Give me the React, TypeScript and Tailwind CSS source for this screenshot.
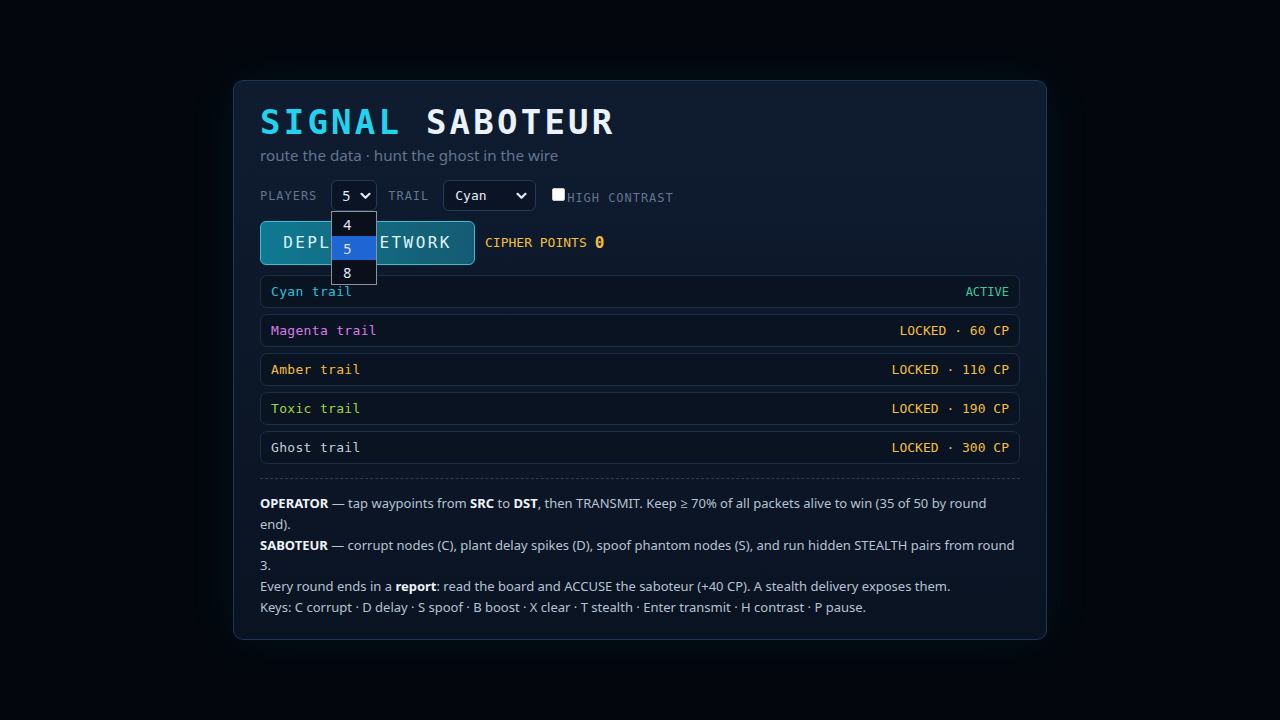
import React from "react";

const mono = { fontFamily: '"DejaVu Sans Mono", "Liberation Mono", monospace' };
const sans = { fontFamily: '"Noto Sans", "Open Sans", sans-serif' };

function Chevron() {
  return (
    <svg width="11" height="8" viewBox="0 0 11 8" fill="none">
      <path d="M1.5 1.8 L5.5 5.8 L9.5 1.8" stroke="#e5ecf5" strokeWidth="2.2" strokeLinecap="round" strokeLinejoin="round" />
    </svg>
  );
}

const trails = [
  { name: "Cyan trail", color: "text-[#22c5dd]", status: "ACTIVE", statusColor: "text-[#36c8a2] text-[12px]" },
  { name: "Magenta trail", color: "text-[#d77ce6]", status: "LOCKED · 60 CP", statusColor: "text-[#f3bf3a] text-[13px]" },
  { name: "Amber trail", color: "text-[#f3bf3a]", status: "LOCKED · 110 CP", statusColor: "text-[#f3bf3a] text-[13px]" },
  { name: "Toxic trail", color: "text-[#a3d63b]", status: "LOCKED · 190 CP", statusColor: "text-[#f3bf3a] text-[13px]" },
  { name: "Ghost trail", color: "text-[#c3cfdf]", status: "LOCKED · 300 CP", statusColor: "text-[#f3bf3a] text-[13px]" },
];

export default function App() {
  return (
    <div className="min-h-screen w-full bg-[#03060d] flex items-center justify-center">
      <div className="w-[814px] h-[560px] rounded-[10px] border border-[#1f3654] bg-gradient-to-b from-[#0f1c30] to-[#0a1322] shadow-[0_0_50px_rgba(34,211,238,0.07)] px-[26px] pt-[20px]">
        <h1 className="text-[34px] leading-[42px] font-bold tracking-[0.095em]" style={mono}>
          <span className="text-[#22d3ee]">SIGNAL</span> <span className="text-[#eaf2ff]">SABOTEUR</span>
        </h1>
        <div className="mt-[1px] text-[15.2px] leading-[22px] text-[#63758f]" style={sans}>
          route the data · hunt the ghost in the wire
        </div>

        <div className="mt-[14px] flex items-center h-[31px]">
          <span className="text-[12px] tracking-[0.08em] text-[#63758f]" style={mono}>PLAYERS</span>
          <div className="relative ml-[14px]">
            <div className="w-[46px] h-[31px] rounded-[6px] border border-[#26395a] bg-[#0b1424] flex items-center justify-between pl-[10px] pr-[5px]">
              <span className="text-[14px] text-[#e5ecf5]" style={sans}>5</span>
              <Chevron />
            </div>
            <div className="absolute left-0 top-[31px] w-[46px] border border-[#8a929e] bg-[#0a0f1c] z-10 text-[14px] text-[#e5ecf5]" style={sans}>
              <div className="h-[24px] pl-[11px] flex items-center">4</div>
              <div className="h-[24px] pl-[11px] flex items-center bg-[#1f65d3]">5</div>
              <div className="h-[24px] pl-[11px] flex items-center">8</div>
            </div>
          </div>
          <span className="ml-[11px] text-[12px] tracking-[0.08em] text-[#63758f]" style={mono}>TRAIL</span>
          <div className="ml-[14px] w-[93px] h-[31px] rounded-[6px] border border-[#26395a] bg-[#0b1424] flex items-center justify-between pl-[11px] pr-[8px]">
            <span className="text-[13px] text-[#e5ecf5]" style={mono}>Cyan</span>
            <Chevron />
          </div>
          <label className="ml-[16px] flex items-center">
            <span className="w-[13px] h-[13px] rounded-[2px] bg-white border border-[#c9ced6] mt-[-2px]"></span>
            <span className="ml-[2px] mt-[4px] text-[12px] tracking-[0.08em] text-[#63758f]" style={mono}>HIGH CONTRAST</span>
          </label>
        </div>

        <div className="mt-[10px] flex items-center">
          <div className="w-[215px] h-[44px] rounded-[6px] border border-[#38bdd4] bg-gradient-to-r from-[#0f7a92] to-[#145b72] flex items-center justify-center text-[16px] tracking-[0.15em] text-[#dff5fb]" style={mono}>
            DEPLOY NETWORK
          </div>
          <span className="ml-[10px] text-[13px] text-[#f3bf3a]" style={mono}>CIPHER POINTS</span>
          <span className="ml-[8px] text-[16px] font-bold text-[#f3bf3a]" style={mono}>0</span>
        </div>

        <div className="mt-[10px] flex flex-col gap-[6px]">
          {trails.map((t) => (
            <div key={t.name} className="h-[33px] rounded-[7px] border border-[#1e2e47] bg-[#0a1321] flex items-center justify-between px-[10px]" style={mono}>
              <span className={`${t.color} text-[13px] tracking-[0.025em]`}>{t.name}</span>
              <span className={t.statusColor}>{t.status}</span>
            </div>
          ))}
        </div>

        <div className="mt-[14px] border-t border-dashed border-[#2a3c57]"></div>

        <div className="mt-[14px] text-[13px] leading-[20.8px] text-[#b7c3d4]" style={sans}>
          <p><b className="text-[#eef3fa]">OPERATOR</b> — tap waypoints from <b className="text-[#eef3fa]">SRC</b> to <b className="text-[#eef3fa]">DST</b>, then TRANSMIT. Keep ≥ 70% of all packets alive to win (35 of 50 by round end).</p>
          <p><b className="text-[#eef3fa]">SABOTEUR</b> — corrupt nodes (C), plant delay spikes (D), spoof phantom nodes (S), and run hidden STEALTH pairs from round 3.</p>
          <p>Every round ends in a <b className="text-[#eef3fa]">report</b>: read the board and ACCUSE the saboteur (+40 CP). A stealth delivery exposes them.</p>
          <p>Keys: C corrupt · D delay · S spoof · B boost · X clear · T stealth · Enter transmit · H contrast · P pause.</p>
        </div>
      </div>
    </div>
  );
}
